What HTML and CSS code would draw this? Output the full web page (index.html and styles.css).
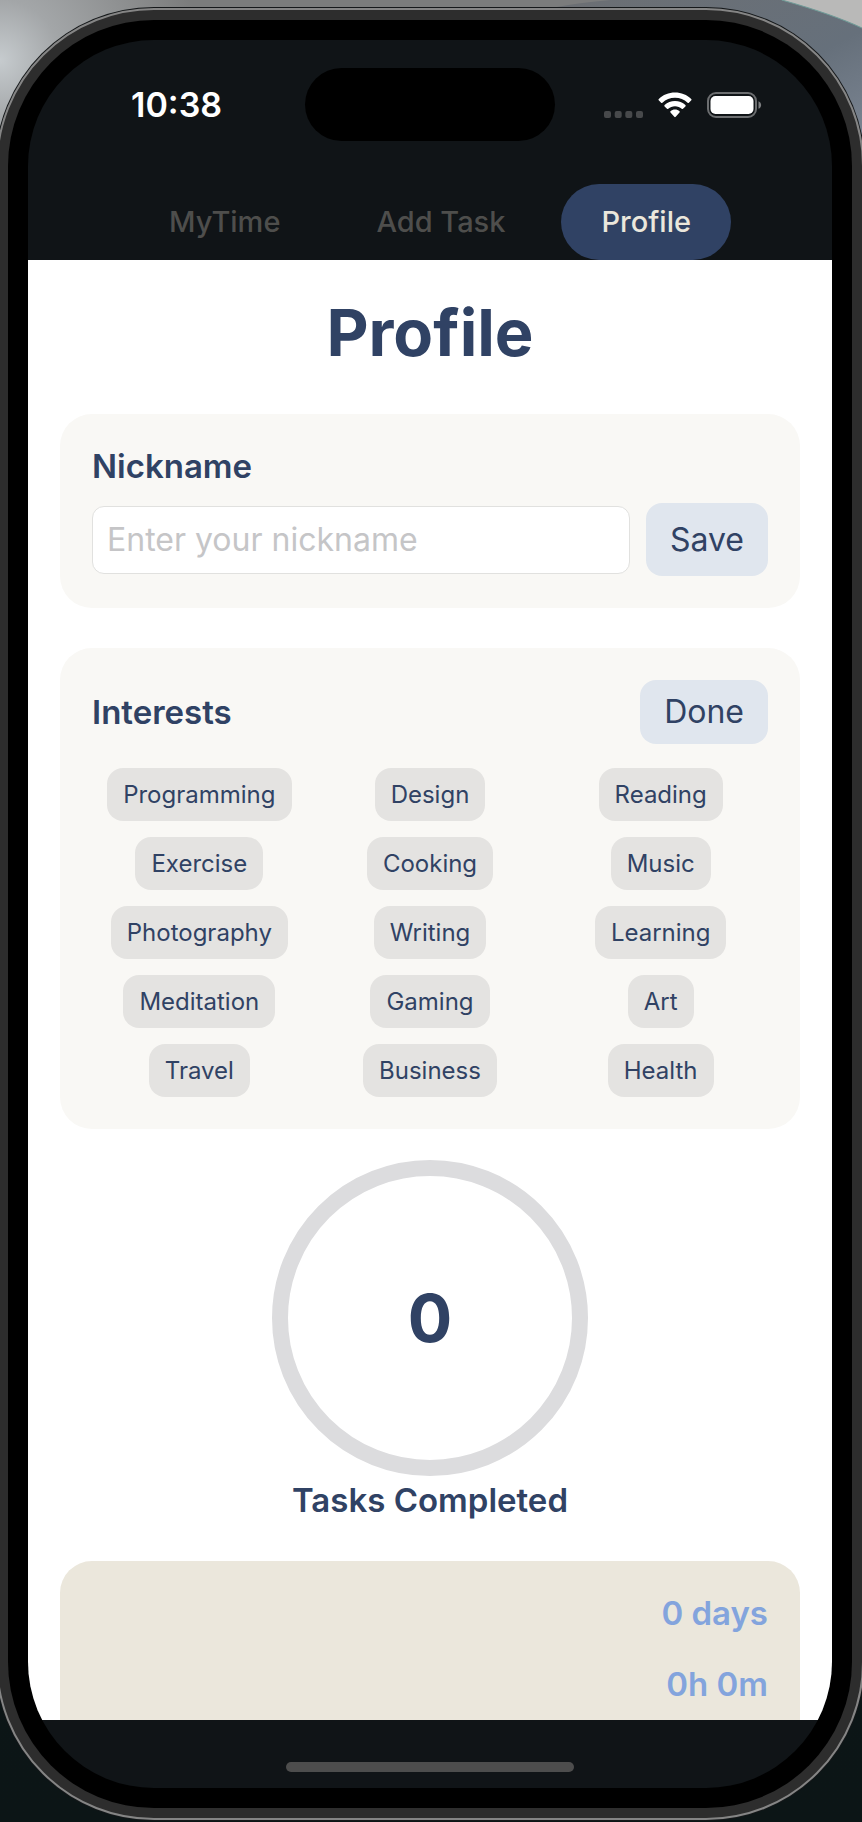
FILE: index.html
```html
<!DOCTYPE html>
<html lang="en">
<head>
<meta charset="utf-8">
<meta name="viewport" content="width=device-width, initial-scale=1">
<title>Profile</title>
<link rel="stylesheet" href="styles.css">
</head>
<body>
<div class="desktop">
  <svg class="wallpaper-top" viewBox="0 0 430 160" preserveAspectRatio="none" aria-hidden="true">
    <defs>
      <linearGradient id="slate" x1="0" y1="0" x2="1" y2="1">
        <stop offset="0" stop-color="#6c6f73"/>
        <stop offset=".6" stop-color="#66707b"/>
        <stop offset="1" stop-color="#7e8896"/>
      </linearGradient>
    </defs>
    <path d="M120 8 Q190 -6 280 0 L350 0 Q400 14 430 28 V160 H120Z" fill="url(#slate)"/>
    <path d="M350 0 Q400 14 430 28 V0Z" fill="#b9b9b8"/>
    <path d="M350 0 Q400 14 430 28" fill="none" stroke="#6f9a97" stroke-width="1"/>
  </svg>
  <div class="device">
    <div class="bezel">
      <div class="screen">
        <header class="top">
          <div class="status">
            <time class="clock">10:38</time>
            <div class="island"></div>
            <div class="indicators">
              <svg class="signal" viewBox="0 0 39 26" role="img" aria-label="No signal">
                <g fill="#47494b"><rect y="19" width="7" height="7" rx="2"/><rect x="10.7" y="19" width="7" height="7" rx="2"/><rect x="21.3" y="19" width="7" height="7" rx="2"/><rect x="32" y="19" width="7" height="7" rx="2"/></g>
              </svg>
              <svg class="wifi" viewBox="0 0 34 26" role="img" aria-label="Wi-Fi">
                <g fill="#fff">
                  <path d="M17 .5C23.300 .5 29 2.900 33.200 6.900Q34 7.600 33.300 8.300L30.900 10.700Q30.300 11.300 29.600 10.700C26.200 7.500 21.800 5.700 17 5.700S7.800 7.500 4.400 10.700Q3.700 11.300 3.100 10.700L.7 8.300Q0 7.600 .8 6.900C5 2.900 10.700 .5 17 .5Z"/>
                  <path d="M17 9C21 9 24.600 10.500 27.400 13Q28.100 13.700 27.400 14.400L25 16.800Q24.400 17.400 23.700 16.800C21.900 15.200 19.600 14.200 17 14.200S12.100 15.200 10.300 16.800Q9.600 17.400 9 16.800L6.600 14.400Q5.900 13.700 6.600 13C9.400 10.500 13 9 17 9Z"/>
                  <path d="M17 17.600C18.700 17.600 20.300 18.200 21.500 19.200Q22.200 19.800 21.500 20.500L17.700 24.800Q17 25.500 16.300 24.800L12.500 20.500Q11.800 19.800 12.500 19.200C13.700 18.200 15.300 17.600 17 17.600Z"/>
                </g>
              </svg>
              <svg class="battery" viewBox="0 0 55 26" role="img" aria-label="Battery full">
                <rect x="1" y="1" width="48" height="24" rx="8" fill="none" stroke="#6c6e70" stroke-width="2"/>
                <rect x="3.500" y="4" width="43" height="18" rx="5" fill="#fff"/>
                <path d="M51.500 9.200C55 10.500 55 15.500 51.500 16.800Z" fill="#7c7e80"/>
              </svg>
            </div>
          </div>
          <nav class="tabs">
            <a class="tab" href="#mytime">MyTime</a>
            <a class="tab" href="#add-task">Add Task</a>
            <a class="tab tab-active" href="#profile" aria-current="page">Profile</a>
          </nav>
        </header>
        <main class="content" id="profile">
          <h1 class="title">Profile</h1>
          <form class="card nickname">
            <label class="heading" for="nickname">Nickname</label>
            <div class="field-row">
              <input class="field" id="nickname" type="text" placeholder="Enter your nickname">
              <button class="action" type="button">Save</button>
            </div>
          </form>
          <section class="card interests">
            <div class="card-head">
              <h2 class="heading">Interests</h2>
              <button class="action action-compact" type="button">Done</button>
            </div>
            <div class="chips">
              <button class="chip" type="button">Programming</button>
              <button class="chip" type="button">Design</button>
              <button class="chip" type="button">Reading</button>
              <button class="chip" type="button">Exercise</button>
              <button class="chip" type="button">Cooking</button>
              <button class="chip" type="button">Music</button>
              <button class="chip" type="button">Photography</button>
              <button class="chip" type="button">Writing</button>
              <button class="chip" type="button">Learning</button>
              <button class="chip" type="button">Meditation</button>
              <button class="chip" type="button">Gaming</button>
              <button class="chip" type="button">Art</button>
              <button class="chip" type="button">Travel</button>
              <button class="chip" type="button">Business</button>
              <button class="chip" type="button">Health</button>
            </div>
          </section>
          <section class="progress">
            <div class="ring">0</div>
            <h2 class="heading">Tasks Completed</h2>
          </section>
          <section class="card stats">
            <p class="stat">0 days</p>
            <p class="stat">0h 0m</p>
          </section>
        </main>
        <footer class="home"><div class="home-bar"></div></footer>
      </div>
    </div>
  </div>
</div>
</body>
</html>
```
FILE: styles.css
```css
* { box-sizing: border-box; }

body {
  margin: 0;
  font-family: Inter, "Liberation Sans", sans-serif;
  color: #304264;
}

h1, h2, p { margin: 0; }

button, input { font: inherit; color: inherit; }

.desktop {
  position: relative;
  display: flex;
  min-height: 100vh;
  padding: 8px 0 2px;
  overflow: hidden;
  background:
    radial-gradient(circle at 0 60px, #c6cbce 0, #a3a6a8 60px, transparent 200px) top / 100% 200px no-repeat,
    linear-gradient(#7b7c7c, #7b7c7c) top / 100% 200px no-repeat,
    linear-gradient(#0c1719, #0c1516);
}

.wallpaper-top {
  position: absolute;
  top: 0;
  right: 0;
  width: 50%;
  height: 160px;
}

/* The device frame runs slightly past both window edges. */
.device {
  position: relative;
  flex: 1;
  display: flex;
  margin: 0 -2px 0 -4px;
  padding: 10px;
  border: 2px solid #858585;
  border-radius: 158px;
  background: #2d2d2d;
  box-shadow: 0 0 0 1px #15181a;
}

.bezel {
  flex: 1;
  display: flex;
  padding: 20px;
  border-radius: 146px;
  background: #000;
}

.screen {
  flex: 1;
  display: flex;
  flex-direction: column;
  overflow: hidden;
  border-radius: 126px;
  background: #101417;
}

.status {
  display: grid;
  grid-template-columns: 1fr 250px 1fr;
  align-items: center;
  padding-top: 28px;
}

.clock {
  padding-left: 103px;
  font-size: 34px;
  line-height: 40px;
  font-weight: 600;
  color: #fff;
}

.island {
  height: 73px;
  border-radius: 37px;
  background: #000;
}

.indicators {
  display: flex;
  gap: 15px;
  padding-left: 49px;
}

.signal { width: 39px; height: 26px; }
.wifi { width: 34px; height: 26px; }
.battery { width: 55px; height: 26px; }

.tabs {
  display: flex;
  justify-content: center;
  gap: 16px;
  padding-top: 43px;
}

.tab {
  padding: 20px 40px;
  border-radius: 38px;
  font-size: 29px;
  line-height: 36px;
  font-weight: 500;
  text-decoration: none;
  color: #4e4e4c;
}

.tab-active {
  background: #304264;
  color: #ebe7dc;
}

.content {
  flex: 1;
  display: flex;
  flex-direction: column;
  padding: 0 32px;
  background: #fff;
}

.title {
  padding: 32px 0 40px;
  font-size: 65px;
  line-height: 82px;
  font-weight: 700;
  text-align: center;
}

.card {
  padding: 32px;
  border-radius: 32px;
  background: #f9f8f5;
}

.heading {
  display: block;
  font-size: 33px;
  line-height: 41px;
  font-weight: 600;
}

.nickname { margin-bottom: 40px; }

.field-row {
  display: flex;
  align-items: center;
  gap: 16px;
  margin-top: 16px;
}

.field {
  flex: 1;
  min-width: 0;
  height: 68px;
  padding: 0 14px;
  border: 1px solid #e1e1df;
  border-radius: 12px;
  background: #fff;
  font-size: 32px;
}

.field::placeholder {
  color: #c5c5c7;
  opacity: 1;
}

.action {
  padding: 16px 24px;
  border: 0;
  border-radius: 16px;
  background: #e0e6ee;
  font-size: 32px;
  line-height: 41px;
}

.action-compact { padding: 12px 24px; line-height: 40px; }

.card-head {
  display: flex;
  align-items: center;
  justify-content: space-between;
}

.chips {
  display: grid;
  grid-template-columns: repeat(3, 1fr);
  justify-items: center;
  gap: 16px;
  margin-top: 24px;
}

.chip {
  padding: 12px 16px;
  border: 0;
  border-radius: 16px;
  background: #e4e3e1;
  font-size: 24px;
  line-height: 29px;
}

.progress {
  display: flex;
  flex-direction: column;
  align-items: center;
  gap: 4px;
  padding: 31px 0 40px;
}

.ring {
  display: grid;
  place-items: center;
  width: 316px;
  height: 316px;
  border: 16px solid #dcdcde;
  border-radius: 50%;
  font-size: 66px;
  font-weight: 700;
}

.stats {
  flex: 1;
  padding-bottom: 0;
  border-radius: 32px 32px 0 0;
  background: #ebe7dc;
}

.stat {
  margin-bottom: 30px;
  font-size: 33px;
  line-height: 41px;
  font-weight: 600;
  text-align: right;
  color: #83a4dd;
}

.stat:last-child { margin-bottom: 0; }

.home {
  display: flex;
  justify-content: center;
  padding: 42px 0 16px;
}

.home-bar {
  width: 288px;
  height: 10px;
  border-radius: 5px;
  background: #4d4d4d;
}
```
